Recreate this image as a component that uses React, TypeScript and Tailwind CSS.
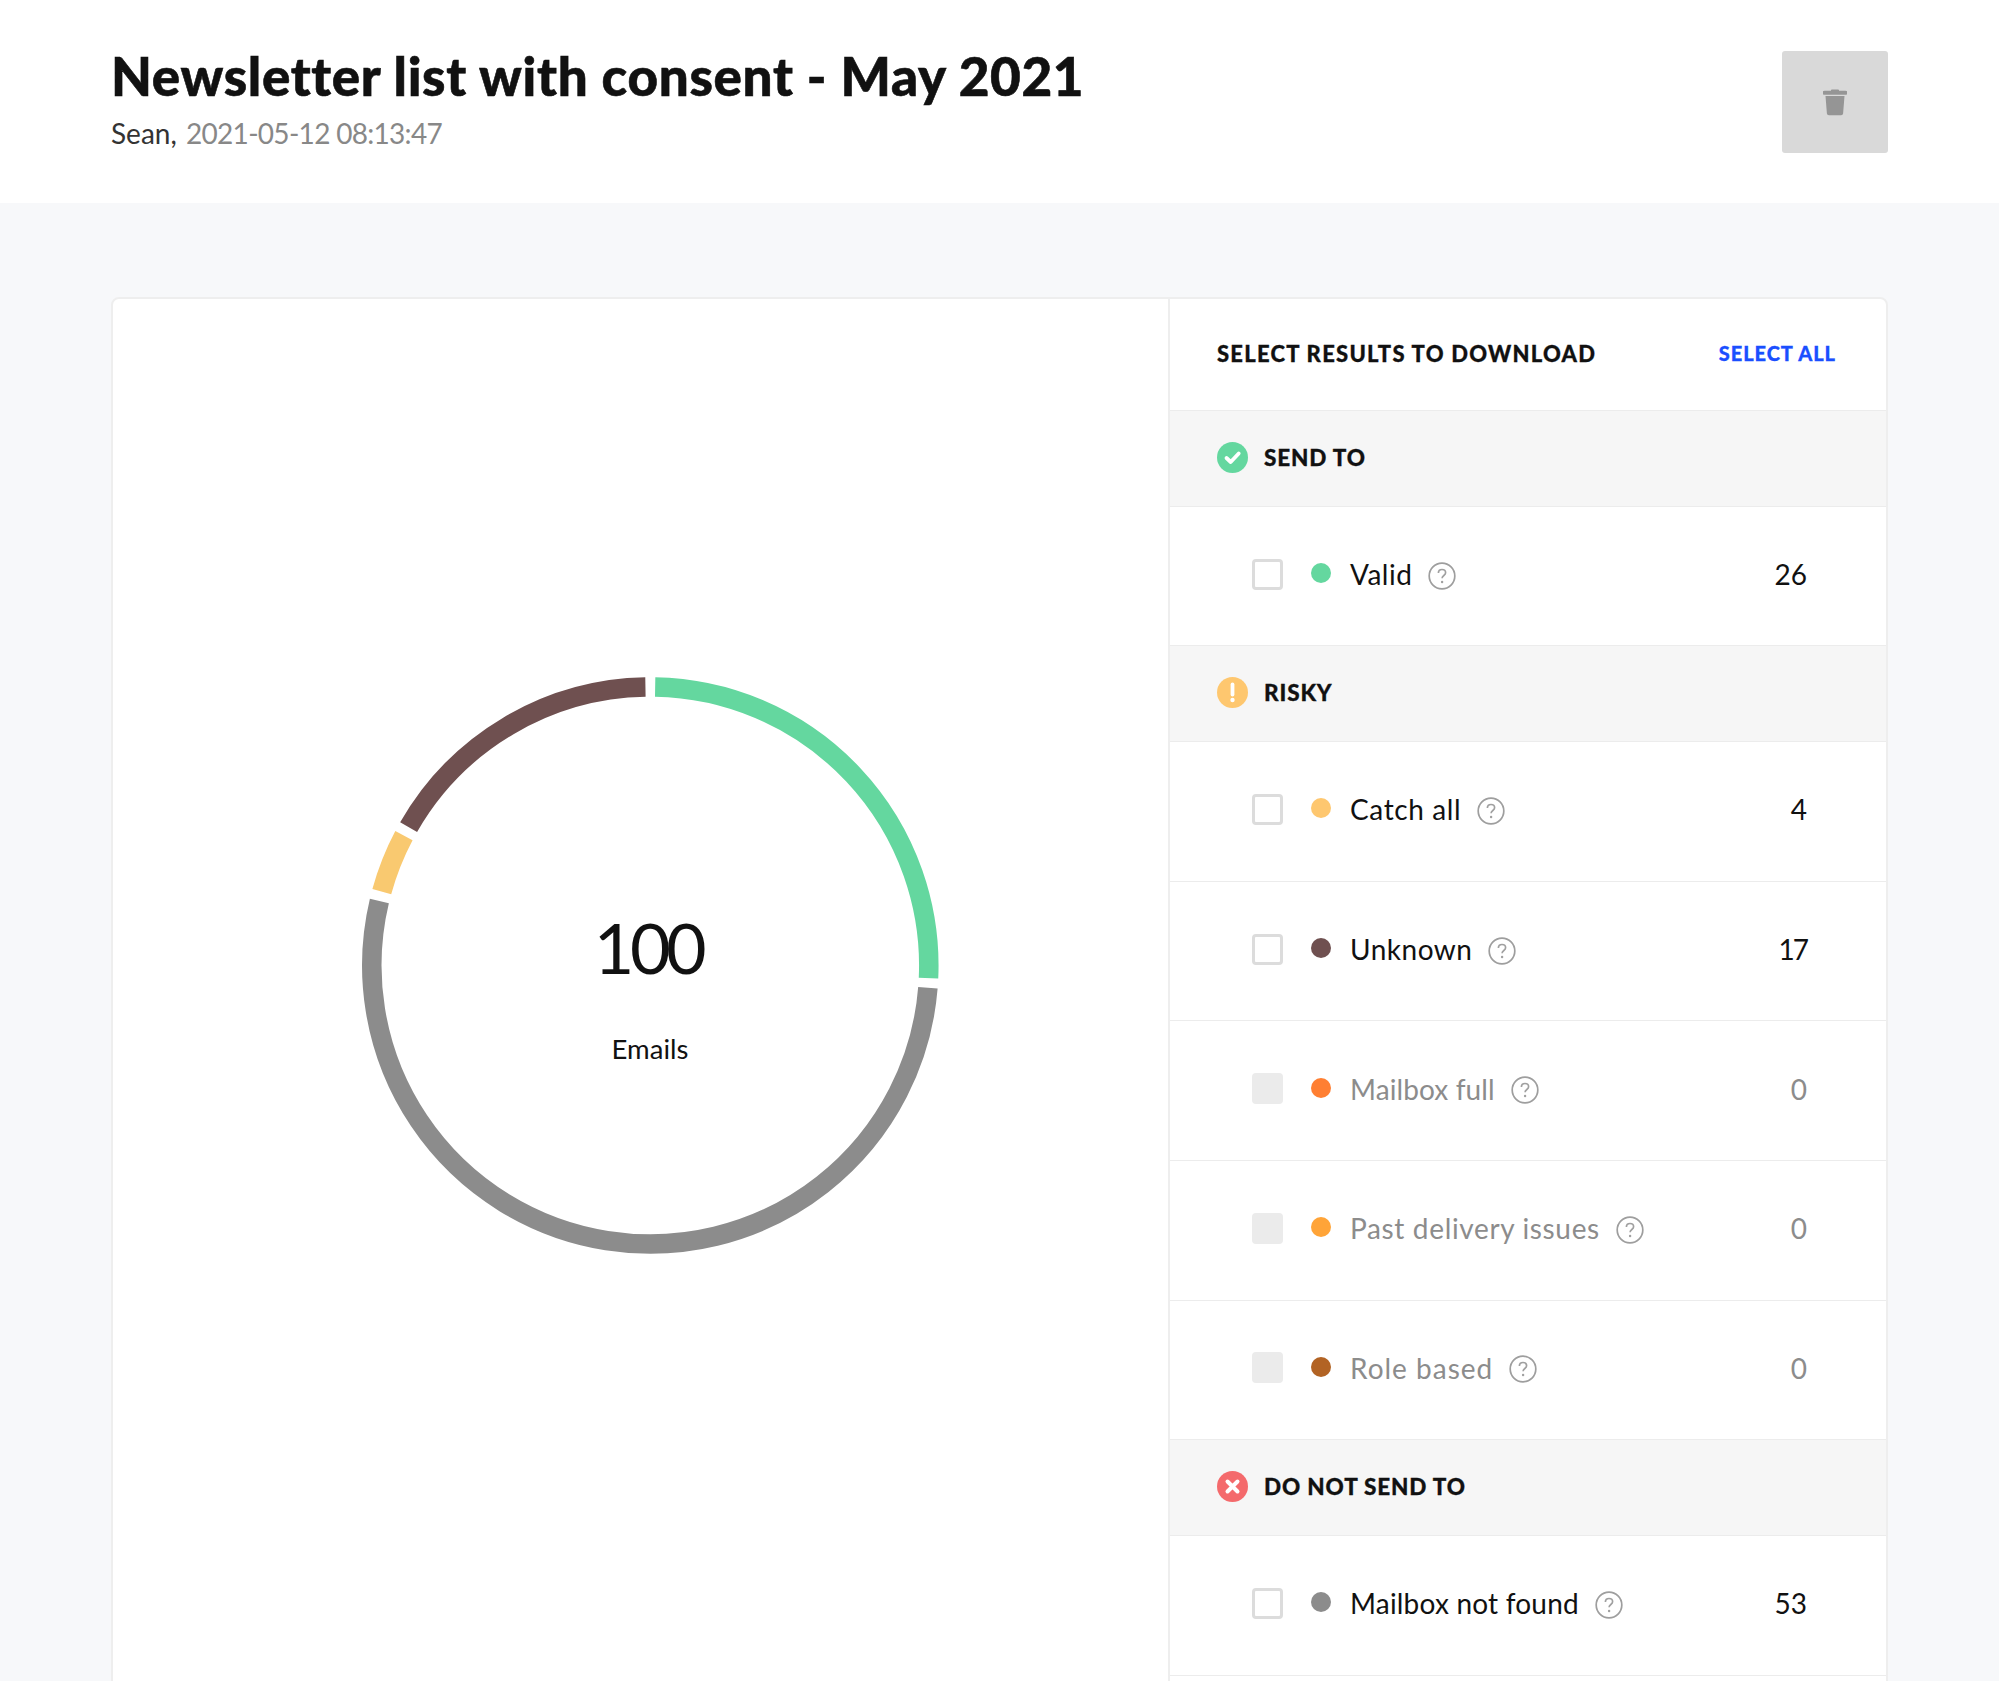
const C = { x: 650.3, y: 965.5, r: 278.5 };

function pt(a: number) {
  const t = ((a - 90) * Math.PI) / 180;
  return `${(C.x - 340 + C.r * Math.cos(t)).toFixed(2)} ${(C.y - 660 + C.r * Math.sin(t)).toFixed(2)}`;
}

function Arc({ from, to, color }: { from: number; to: number; color: string }) {
  const large = to - from > 180 ? 1 : 0;
  return <path d={`M ${pt(from)} A ${C.r} ${C.r} 0 ${large} 1 ${pt(to)}`} fill="none" stroke={color} strokeWidth={19.5} />;
}

function Donut() {
  return (
    <div className="relative w-[620px] h-[620px]">
      <svg width="620" height="620" viewBox="0 0 620 620" className="absolute inset-0">
        <Arc from={1} to={92.6} color="#64d79f" />
        <Arc from={94.6} to={283.4} color="#8c8c8c" />
        <Arc from={285.4} to={297.8} color="#f9c970" />
        <Arc from={299.8} to={359} color="#6f5050" />
      </svg>
      <div className="absolute left-[0px] w-[616px] top-[245px] text-center text-[70px] leading-[84px] tracking-[-4.5px] text-[#111111]">100</div>
      <div className="absolute left-[0px] w-[620px] top-[372px] text-center text-[27.5px] leading-[34px] text-[#111111]">Emails</div>
    </div>
  );
}

function Help() {
  return (
    <svg width="28" height="28" viewBox="0 0 28 28" className="ml-[16px] mt-[3px] shrink-0">
      <circle cx="14" cy="14" r="12.800" fill="none" stroke="#9e9e9e" strokeWidth="1.700" />
      <path d="M10.400 11c0-2.200 1.600-3.500 3.600-3.500s3.600 1.300 3.600 3.200c0 2.800-3.500 2.800-3.500 5.500" fill="none" stroke="#a0a0a0" strokeWidth="1.700" />
      <circle cx="14.100" cy="20" r="1.200" fill="#a0a0a0" />
    </svg>
  );
}

function Row({ label, count, dot, track, countTrack, disabled }: { label: string; count: number; dot: string; track: string; countTrack?: string; disabled?: boolean }) {
  const box = disabled ? "bg-[#ebebeb]" : "border-[3px] border-[#dcdcdc] bg-white";
  return (
    <div className="h-[139.6px] border-b border-[#ececec] flex items-center pl-[82px] pr-[79px] pb-[4px] bg-white">
      <div className={`w-[31px] h-[31px] rounded-[4px] shrink-0 ${box}`} />
      <div className={`w-[20px] h-[20px] rounded-full ml-[28px] mb-[2px] shrink-0 ${dot}`} />
      <div className={`ml-[19px] text-[28px] leading-[34px] ${track} ${disabled ? "text-[#8c8c8c]" : "text-[#111111]"}`}>{label}</div>
      <Help />
      <div className={`ml-auto text-[28px] leading-[34px] ${countTrack ?? ""} ${disabled ? "text-[#8c8c8c]" : "text-[#111111]"}`}>{count}</div>
    </div>
  );
}

function Group({ label, children }: { label: string; children: React.ReactNode }) {
  return (
    <div className="h-[95.8px] border-b border-[#ececec] bg-[#f6f6f6] flex items-center pl-[47px] pb-[2px]">
      {children}
      <div className="ml-[16px] text-[22.5px] font-black text-[#111111] tracking-[0.85px] [-webkit-text-stroke:0.3px_#111111]">{label}</div>
    </div>
  );
}

export default function App() {
  return (
    <div className="h-[1681px] overflow-hidden bg-[#f7f8fa] font-['Lato','Open_Sans',sans-serif]">
      <header className="h-[203px] bg-white flex justify-between pl-[111px] pr-[111px] pt-[50px]">
        <div>
          <h1 className="text-[53px] leading-[52px] font-black tracking-[0.65px] text-[#111111] [-webkit-text-stroke:0.6px_#111111]">Newsletter list with consent - May 2021</h1>
          <p className="mt-[13px] text-[28px] leading-[36px] text-[#888888]"><span className="text-[#333333]">Sean,</span> <span className="ml-[2px] tracking-[-0.7px]">2021-05-12 08:13:47</span></p>
        </div>
        <button className="w-[106px] h-[102px] mt-[1px] bg-[#d9d9d9] rounded-[3px] flex items-center justify-center">
          <svg width="24" height="28" viewBox="0 0 24 28">
            <path d="M9 1.500h6a1 1 0 0 1 1 1.200h6.500a1.500 1.500 0 0 1 0 4H1.500a1.500 1.500 0 0 1 0-4H8a1 1 0 0 1 1-1.200z" fill="#959595" />
            <path d="M2.500 8h19l-1.400 17.500a2 2 0 0 1-2 1.800H5.900a2 2 0 0 1-2-1.800z" fill="#959595" />
          </svg>
        </button>
      </header>
      <main className="pt-[94px] pl-[111px] pr-[111px]">
        <div className="flex h-[1500px] bg-white border-2 border-[#eeeeee] rounded-[8px]">
          <div className="w-[1057px] border-r-2 border-[#eeeeee] relative">
            <div className="absolute left-[227px] top-[361px]">
              <Donut />
            </div>
          </div>
          <div className="flex-1">
            <div className="h-[112px] border-b border-[#ececec] flex items-center justify-between pl-[47px] pr-[50px]">
              <div className="text-[22px] font-black text-[#111111] tracking-[1.25px] mb-[3px] [-webkit-text-stroke:0.3px_#111111]">SELECT RESULTS TO DOWNLOAD</div>
              <div className="text-[20px] font-black text-[#1a4fff] tracking-[0.95px] mb-[4px] [-webkit-text-stroke:0.3px_#1a4fff]">SELECT ALL</div>
            </div>
            <Group label="SEND TO">
              <svg width="31" height="31" viewBox="0 0 31 31" className="shrink-0">
                <circle cx="15.500" cy="15.500" r="15.500" fill="#64d79f" />
                <path d="M9.500 16l4.200 4 8-8.500" fill="none" stroke="#fff" strokeWidth="3.800" strokeLinecap="round" strokeLinejoin="round" />
              </svg>
            </Group>
            <Row label="Valid" count={26} dot="bg-[#64d79f]" track="tracking-[0.5px]" />
            <Group label="RISKY">
              <svg width="31" height="31" viewBox="0 0 31 31" className="shrink-0">
                <circle cx="15.500" cy="15.500" r="15.500" fill="#fec76f" />
                <path d="M15.500 7.500v10" fill="none" stroke="#fff" strokeWidth="3.800" strokeLinecap="round" />
                <circle cx="15.500" cy="23" r="2.200" fill="#fff" />
              </svg>
            </Group>
            <Row label="Catch all" count={4} dot="bg-[#fec76f]" track="tracking-[0.6px]" />
            <Row label="Unknown" count={17} dot="bg-[#6f5050]" track="tracking-[0.5px]" countTrack="tracking-[-2px]" />
            <Row label="Mailbox full" count={0} dot="bg-[#ff7f32]" track="tracking-[0.1px]" disabled />
            <Row label="Past delivery issues" count={0} dot="bg-[#ffa438]" track="tracking-[0.65px]" disabled />
            <Row label="Role based" count={0} dot="bg-[#b26324]" track="tracking-[1px]" disabled />
            <Group label="DO NOT SEND TO">
              <svg width="31" height="31" viewBox="0 0 31 31" className="shrink-0">
                <circle cx="15.500" cy="15.500" r="15.500" fill="#f46a6c" />
                <path d="M10.500 10.500l10 10M20.500 10.500l-10 10" fill="none" stroke="#fff" strokeWidth="4" strokeLinecap="round" />
              </svg>
            </Group>
            <Row label="Mailbox not found" count={53} dot="bg-[#8c8c8c]" track="tracking-[0.2px]" />
          </div>
        </div>
      </main>
    </div>
  );
}
